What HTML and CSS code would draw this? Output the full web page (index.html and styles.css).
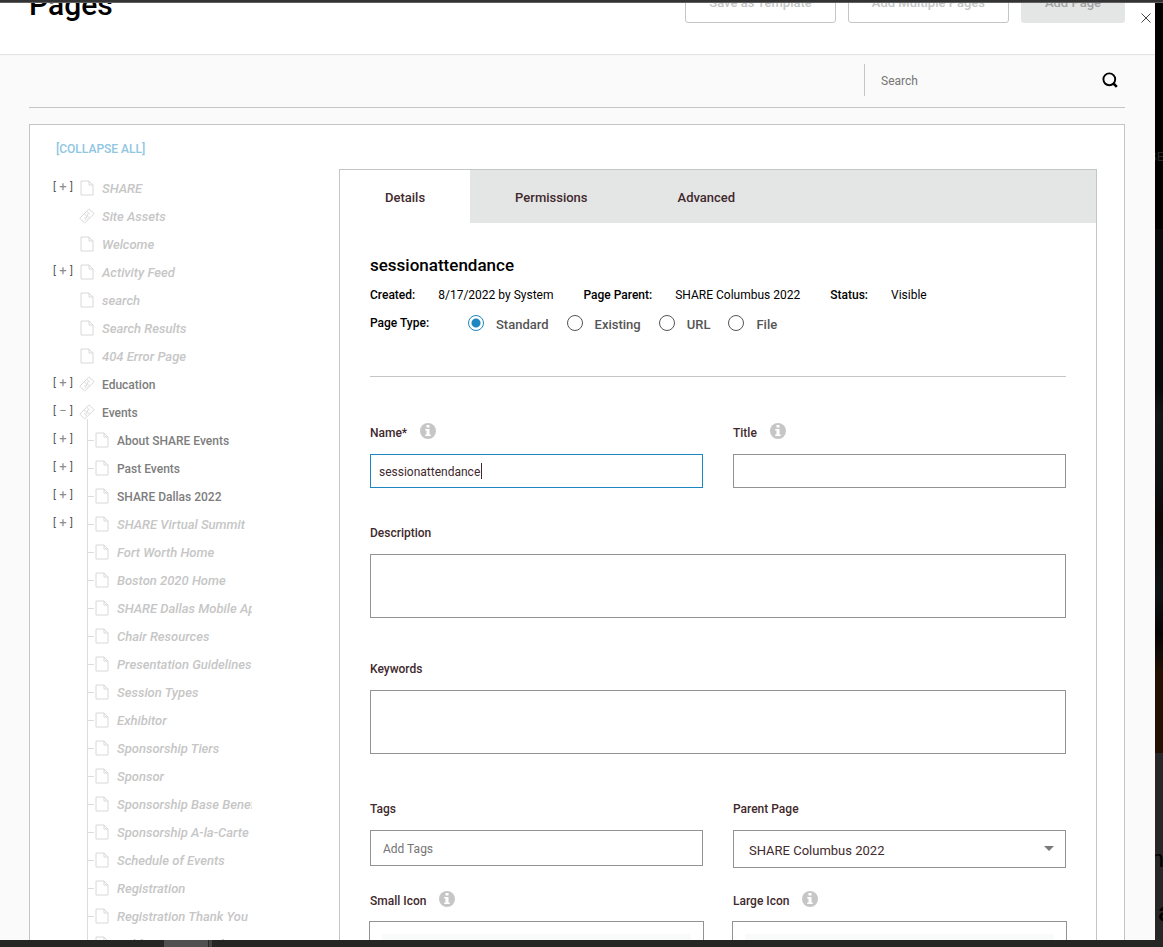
FILE: index.html
```html
<!DOCTYPE html>
<html lang="en">
<head>
    <meta charset="UTF-8">
    <meta name="viewport" content="width=device-width, initial-scale=1.0">
    <title>Pages</title>
    <link rel="stylesheet" href="styles.css">
</head>
<body>
    <!-- shared icons -->
    <svg class="sprite" aria-hidden="true">
        <symbol id="icon-page" viewBox="0 0 14 16">
            <path d="M1 1h8l4 4v10H1z M9 1v4h4" fill="none" stroke="currentColor"/>
        </symbol>
        <symbol id="icon-link" viewBox="0 0 16 16">
            <path d="M.8 10.2L10 .9l5.1 4.8-9.4 9.4z M5.2 5.8l2 2a1.4 1.4 0 0 1-2 2 M10.6 10.2l-2-2a1.4 1.4 0 0 1 2-2 M7.8 3.4l2 2M6.2 12.4l2-2" fill="none" stroke="currentColor"/>
        </symbol>
        <symbol id="icon-info" viewBox="0 0 16 16">
            <circle cx="8" cy="8" r="8" fill="#c6c6c6"/>
            <path d="M6.5 2h3v2.6h-3z M5.2 6h4.3v5.4h1.3V13H5.2v-1.6h1.3V7.6H5.2z" fill="#fff"/>
        </symbol>
    </svg>

    <div class="top-bar"></div>

    <div class="stage">
        <div class="modal">
            <header class="modal-header">
                <h1>Pages</h1>
                <div class="actions">
                    <button type="button" class="btn">Save as Template</button>
                    <button type="button" class="btn">Add Multiple Pages</button>
                    <button type="button" class="btn btn-primary">Add Page</button>
                </div>
                <button type="button" class="close" aria-label="Close">
                    <svg width="10" height="10" viewBox="0 0 10 10"><path d="M.5.5l9 9M9.5.5l-9 9" stroke="#444" fill="none"/></svg>
                </button>
            </header>

            <div class="content">
                <div class="search-row">
                    <div class="search">
                        <input type="text" placeholder="Search" aria-label="Search">
                        <button type="button" aria-label="Run search">
                            <svg width="16" height="16" viewBox="0 0 16 16"><circle cx="7.3" cy="7.3" r="5.9" fill="none" stroke="#000" stroke-width="1.9"/><path d="M11 11l3.8 3.8" stroke="#000" stroke-width="2.6"/></svg>
                        </button>
                    </div>
                </div>

                <div class="box">
                    <nav class="sidebar">
                        <a href="#" class="collapse">[COLLAPSE ALL]</a>
                        <ul class="tree" id="tree"></ul>
                    </nav>

                    <main class="panel">
                        <div class="tabs" role="tablist">
                            <button type="button" role="tab" class="tab active">Details</button>
                            <button type="button" role="tab" class="tab">Permissions</button>
                            <button type="button" role="tab" class="tab">Advanced</button>
                        </div>

                        <form class="details">
                            <h2>sessionattendance</h2>
                            <div class="meta">
                                <strong>Created:</strong><span>8/17/2022 by System</span>
                                <strong>Page Parent:</strong><span>SHARE Columbus 2022</span>
                                <strong>Status:</strong><span>Visible</span>
                            </div>
                            <div class="page-type">
                                <strong>Page Type:</strong>
                                <label><input type="radio" name="type" checked><span>Standard</span></label>
                                <label><input type="radio" name="type"><span>Existing</span></label>
                                <label><input type="radio" name="type"><span>URL</span></label>
                                <label><input type="radio" name="type"><span>File</span></label>
                            </div>

                            <hr>

                            <div class="row">
                                <div class="field">
                                    <div class="label"><label for="name">Name*</label><svg class="info"><use href="#icon-info"/></svg></div>
                                    <div class="focus-wrap">
                                        <input type="text" id="name" class="focused" value="sessionattendance">
                                        <i class="caret"></i>
                                    </div>
                                </div>
                                <div class="field">
                                    <div class="label"><label for="title">Title</label><svg class="info"><use href="#icon-info"/></svg></div>
                                    <input type="text" id="title">
                                </div>
                            </div>

                            <div class="field description">
                                <div class="label"><label for="description">Description</label></div>
                                <textarea id="description"></textarea>
                            </div>

                            <div class="field keywords">
                                <div class="label"><label for="keywords">Keywords</label></div>
                                <textarea id="keywords"></textarea>
                            </div>

                            <div class="row">
                                <div class="field">
                                    <div class="label"><label for="tags">Tags</label></div>
                                    <input type="text" id="tags" class="tags" placeholder="Add Tags">
                                </div>
                                <div class="field">
                                    <div class="label"><label for="parent">Parent Page</label></div>
                                    <div class="select-wrap">
                                        <select id="parent"><option>SHARE Columbus 2022</option></select>
                                        <svg class="arrow" width="10" height="5" viewBox="0 0 10 5"><path d="M0 0h10L5 5z" fill="#777b7d"/></svg>
                                    </div>
                                </div>
                            </div>

                            <div class="row icons">
                                <div class="field">
                                    <div class="label"><span>Small Icon</span><svg class="info"><use href="#icon-info"/></svg></div>
                                    <div class="drop"><div></div></div>
                                </div>
                                <div class="field">
                                    <div class="label"><span>Large Icon</span><svg class="info"><use href="#icon-info"/></svg></div>
                                    <div class="drop"><div></div></div>
                                </div>
                            </div>
                        </form>
                    </main>
                </div>
            </div>
        </div>

        <div class="backdrop">
            <span class="ghost ghost-nav">SE</span>
            <span class="ghost ghost-title">m</span>
            <span class="ghost ghost-sub">a</span>
        </div>
    </div>

    <div class="bottom-bar"><span></span><span></span></div>

    <script>
        const pages = [
            { name: "SHARE", hidden: true, toggle: "+" },
            { name: "Site Assets", hidden: true, icon: "link" },
            { name: "Welcome", hidden: true },
            { name: "Activity Feed", hidden: true, toggle: "+" },
            { name: "search", hidden: true },
            { name: "Search Results", hidden: true },
            { name: "404 Error Page", hidden: true },
            { name: "Education", icon: "link", toggle: "+" },
            { name: "Events", icon: "link", toggle: "−", children: [
                { name: "About SHARE Events", toggle: "+" },
                { name: "Past Events", toggle: "+" },
                { name: "SHARE Dallas 2022", toggle: "+" },
                { name: "SHARE Virtual Summit", hidden: true, toggle: "+" },
                { name: "Fort Worth Home", hidden: true },
                { name: "Boston 2020 Home", hidden: true },
                { name: "SHARE Dallas Mobile App", hidden: true },
                { name: "Chair Resources", hidden: true },
                { name: "Presentation Guidelines", hidden: true },
                { name: "Session Types", hidden: true },
                { name: "Exhibitor", hidden: true },
                { name: "Sponsorship Tiers", hidden: true },
                { name: "Sponsor", hidden: true },
                { name: "Sponsorship Base Benefits", hidden: true },
                { name: "Sponsorship A-la-Carte", hidden: true },
                { name: "Schedule of Events", hidden: true },
                { name: "Registration", hidden: true },
                { name: "Registration Thank You", hidden: true },
                { name: "Publications Board", hidden: true }
            ] }
        ];

        function generateItemHTML(page) {
            const toggle = page.toggle
                ? `<button type="button" class="toggle" aria-label="Toggle ${page.name}"><b>[</b>${page.toggle}<b>]</b></button>`
                : `<span class="toggle"></span>`;
            const children = page.children ? `<ul>${page.children.map(generateItemHTML).join("")}</ul>` : "";
            return `
                <li>
                    <div class="node">
                        ${toggle}
                        <svg class="icon"><use href="#icon-${page.icon || "page"}"/></svg>
                        <a href="#" class="${page.hidden ? "muted" : ""}">${page.name}</a>
                    </div>
                    ${children}
                </li>
            `;
        }

        document.getElementById("tree").innerHTML = pages.map(generateItemHTML).join("");
    </script>
</body>
</html>
```
FILE: styles.css
```css
* {
    box-sizing: border-box;
}

body {
    font-family: Roboto, "Liberation Sans", sans-serif;
    font-size: 12px;
    margin: 0;
    height: 100vh;
    display: flex;
    flex-direction: column;
    overflow: hidden;
    background: #000;
    color: #000;
}

button, input, textarea, select {
    font-family: inherit;
    font-size: 12px;
}

button {
    border: 0;
    padding: 0;
    background: none;
}

strong {
    font-weight: 500;
}

a {
    text-decoration: none;
}

.sprite {
    position: absolute;
    width: 0;
    height: 0;
}

.top-bar {
    flex: none;
    height: 3px;
    background: #333;
    border-bottom: 1px solid #5f5f5f;
}

.stage {
    flex: 1;
    min-height: 0;
    display: flex;
}

.modal {
    flex: 1;
    min-width: 0;
    overflow: hidden;
    background: #fafafa;
}

/* header, scrolled partly out of view */
.modal-header {
    position: relative;
    display: flex;
    justify-content: space-between;
    align-items: flex-end;
    height: 51px;
    padding: 0 30px 31px 29px;
    overflow: hidden;
    background: #fff;
    box-shadow: 0 1px 1px #e4e4e4;
}

h1 {
    margin: 0;
    font-size: 30px;
    font-weight: 500;
    line-height: 36px;
}

.actions {
    display: flex;
    gap: 12px;
}

.btn {
    height: 42px;
    padding: 0 23px;
    border: 1px solid #c4c6c6;
    border-radius: 3px;
    background: #fff;
    color: #c4c6c6;
    font-size: 13px;
    font-weight: 500;
}

.btn-primary {
    border-color: #e4e6e5;
    background: #e4e6e5;
    color: #a2a4a4;
}

.close {
    position: absolute;
    right: 4px;
    top: 10px;
    width: 10px;
    height: 10px;
}

.close svg, .search svg {
    display: block;
}

.content {
    padding: 10px 30px 0 29px;
}

.search-row {
    display: flex;
    justify-content: flex-end;
    padding-bottom: 11px;
    margin-bottom: 16px;
    border-bottom: 1px solid #c4c6c6;
}

.search {
    display: flex;
    align-items: center;
    width: 261px;
    height: 32px;
    padding: 0 7px 0 16px;
    border-left: 1px solid #c4c6c6;
}

.search input {
    flex: 1;
    min-width: 0;
    border: 0;
    padding: 2px 0 0;
    background: none;
}

.search input::placeholder, .tags::placeholder {
    color: #757575;
}

.box {
    display: flex;
    padding: 0 27px 30px 23px;
    border: 1px solid #c4c6c6;
    background: #fff;
}

.sidebar {
    flex: none;
    width: 199px;
    margin-right: 87px;
    padding-top: 14px;
    overflow: hidden;
}

.collapse {
    display: block;
    padding-left: 3px;
    margin-bottom: 16px;
    line-height: 20px;
    font-weight: 500;
    color: #8fc6e2;
}

.tree, .tree ul {
    list-style-type: none;
    margin: 0;
    padding: 0;
}

.node {
    display: flex;
    align-items: center;
    height: 28px;
    white-space: nowrap;
}

.toggle {
    flex: none;
    display: flex;
    justify-content: space-between;
    width: 20px;
    height: 18px;
    margin-right: 6px;
    font-size: 13px;
    line-height: 14px;
    color: #8c8c8c;
}

.toggle b {
    font-size: 11px;
    font-weight: 400;
    color: #555;
}

.icon {
    flex: none;
    width: 16px;
    height: 16px;
    margin: 0 7px 2px 0;
    color: #d8d8d8;
}

.node a {
    line-height: 20px;
    font-weight: 500;
    color: #7d7d7d;
}

.node a.muted {
    font-size: 13px;
    font-style: italic;
    color: #c6c6c6;
}

/* child pages hang off a guide line */
.tree ul {
    position: relative;
}

.tree ul::before {
    content: "";
    position: absolute;
    left: 34px;
    top: -8px;
    bottom: 0;
    border-left: 1px solid #dcdcdc;
}

.tree ul .node::before {
    content: "";
    flex: none;
    order: 1;
    width: 7px;
    margin-bottom: 2px;
    border-top: 1px solid #dcdcdc;
}

.tree ul .toggle {
    margin-right: 14px;
}

.tree ul .icon {
    order: 2;
}

.tree ul a {
    order: 3;
}

.panel {
    flex: 1;
    min-width: 0;
    margin-top: 44px;
    border: 1px solid #c4c6c6;
}

.tabs {
    display: flex;
    height: 53px;
    background: #e4e6e5;
}

.tab {
    padding: 2px 45px 0;
    font-size: 13px;
    font-weight: 500;
    color: #41292d;
}

.tab.active {
    background: #fff;
}

.details {
    padding: 30px 30px 0;
}

h2 {
    margin: 0 0 10px;
    font-size: 17px;
    font-weight: 500;
    line-height: 24px;
}

.meta {
    display: flex;
    align-items: center;
    height: 16px;
}

.meta strong {
    margin-right: 23px;
}

.meta span {
    margin-right: 30px;
}

.page-type {
    display: flex;
    align-items: center;
    height: 20px;
    margin-top: 10px;
}

.page-type strong {
    width: 98px;
}

.page-type label {
    display: flex;
    align-items: center;
    gap: 12px;
    margin-right: 18px;
    font-size: 13px;
    font-weight: 500;
    color: #555;
}

.page-type span {
    padding-top: 2px;
}

.page-type input {
    appearance: none;
    width: 16px;
    height: 16px;
    margin: 0;
    border: 1px solid #555;
    border-radius: 50%;
    background: #fff;
}

.page-type input:checked {
    border-color: #1c87c0;
    background: radial-gradient(circle, #1c87c0 4px, #fff 5px);
}

hr {
    margin: 43px 0 46px;
    border: 0;
    border-top: 1px solid #c4c6c6;
}

.row {
    display: grid;
    grid-template-columns: 1fr 1fr;
    gap: 30px;
}

.label {
    display: flex;
    align-items: flex-end;
    gap: 13px;
    height: 18px;
    margin-bottom: 13px;
    line-height: 16px;
    font-weight: 500;
    color: #41292d;
}

.info {
    align-self: flex-start;
    width: 16px;
    height: 16px;
}

.field input, .field textarea, .field select {
    display: block;
    width: 100%;
    height: 34px;
    padding: 2px 8px 0;
    border: 1px solid #919394;
    border-radius: 0;
    background: #fff;
    color: #41292d;
}

.field textarea {
    height: 64px;
    resize: none;
}

.field input.focused {
    border-color: #1c87c0;
}

.focus-wrap, .select-wrap {
    position: relative;
}

.caret {
    position: absolute;
    left: 111px;
    top: 9px;
    width: 1px;
    height: 16px;
    background: #41292d;
}

.description {
    margin-top: 35px;
}

.keywords {
    margin: 41px 0 45px;
}

.field input.tags {
    height: 36px;
    padding: 2px 12px 0;
}

.field select {
    appearance: none;
    height: 38px;
    padding: 2px 15px 0;
    font-size: 13px;
}

.arrow {
    position: absolute;
    right: 12px;
    top: 16px;
}

.icons {
    margin-top: 23px;
}

.icons .label {
    margin-bottom: 12px;
}

.drop {
    height: 120px;
    margin: 0 -1px;
    padding: 12px;
    border: 1px solid #919394;
}

.drop div {
    height: 100%;
    background: #f9fbfa;
}

/* dimmed page behind the dialog */
.backdrop {
    position: relative;
    flex: none;
    width: 8px;
    overflow: hidden;
    background: linear-gradient(#000 226px, #0a0a0b 226px, #08090a 385px, #131516 410px, #0e1012 480px, #0c0806 520px, #101315 590px, #060404 630px, #120b08 650px, #221003 670px, #221003 750px, #272727 750px);
}

.ghost {
    position: absolute;
    color: #000;
}

.ghost-nav {
    left: -6px;
    top: 146px;
    font-size: 13px;
    color: #2a2a2a;
}

.ghost-title {
    left: -12px;
    top: 842px;
    font-size: 24px;
}

.ghost-sub {
    left: 3px;
    top: 894px;
    font-size: 26px;
    font-weight: 500;
}

.bottom-bar {
    flex: none;
    display: flex;
    gap: 1px;
    height: 7px;
    padding-left: 164px;
    background: #262725;
}

.bottom-bar span {
    width: 44px;
    background: #505050;
}

.bottom-bar span + span {
    width: 3px;
    background: #444;
}
```
